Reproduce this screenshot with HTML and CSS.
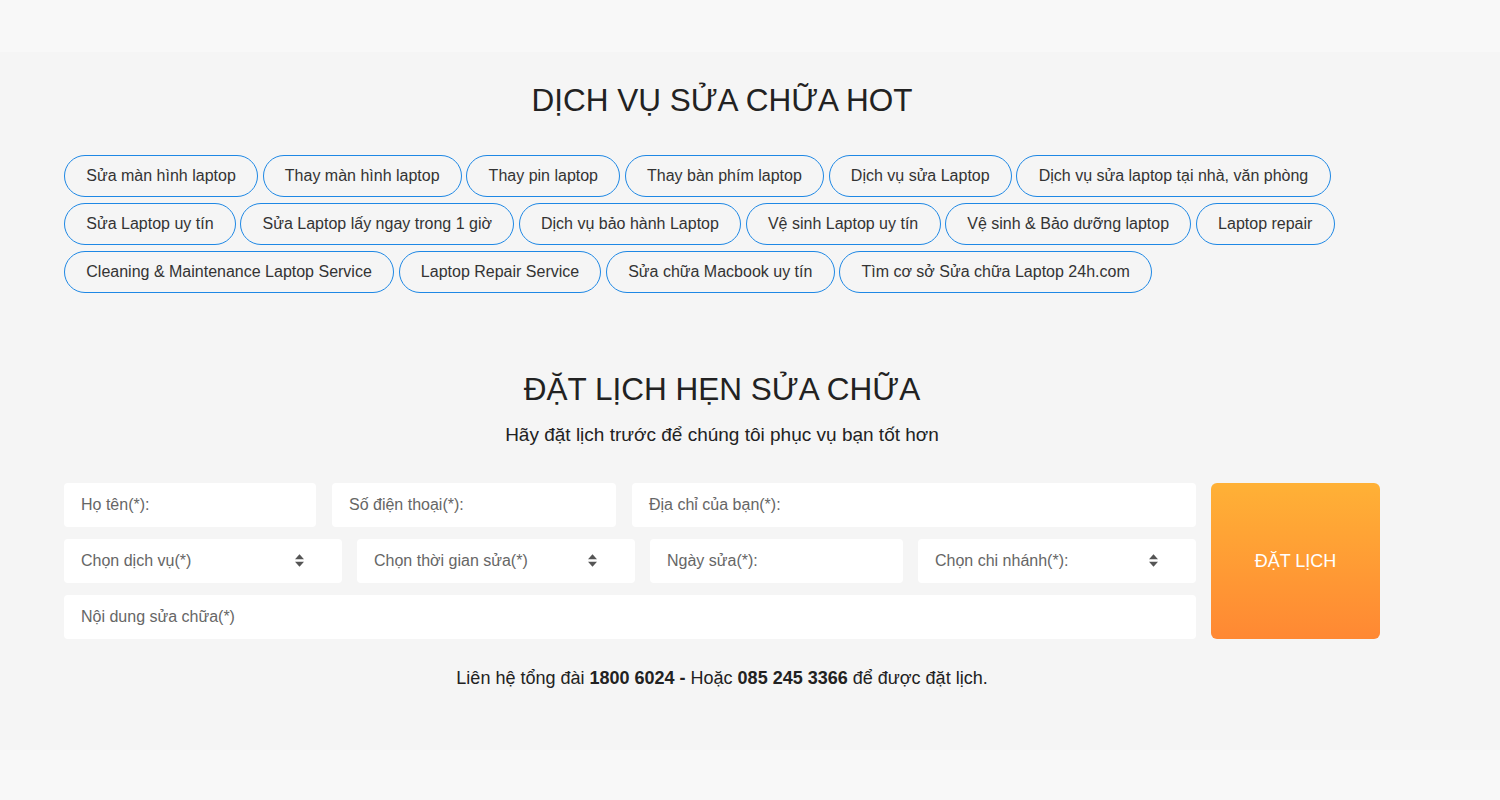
FILE: index.html
```html
<!DOCTYPE html>
<html lang="vi">
<head>
<meta charset="utf-8">
<title>Dịch vụ sửa chữa hot</title>
<link rel="stylesheet" href="styles.css">
</head>
<body>
<div class="band band-top"></div>
<main class="main">
  <section class="hot">
    <h2 class="title">DỊCH VỤ SỬA CHỮA HOT</h2>
    <div class="chips">
      <a class="chip">Sửa màn hình laptop</a>
      <a class="chip">Thay màn hình laptop</a>
      <a class="chip">Thay pin laptop</a>
      <a class="chip">Thay bàn phím laptop</a>
      <a class="chip">Dịch vụ sửa Laptop</a>
      <a class="chip">Dịch vụ sửa laptop tại nhà, văn phòng</a>
      <a class="chip">Sửa Laptop uy tín</a>
      <a class="chip">Sửa Laptop lấy ngay trong 1 giờ</a>
      <a class="chip">Dịch vụ bảo hành Laptop</a>
      <a class="chip">Vệ sinh Laptop uy tín</a>
      <a class="chip">Vệ sinh &amp; Bảo dưỡng laptop</a>
      <a class="chip">Laptop repair</a>
      <a class="chip">Cleaning &amp; Maintenance Laptop Service</a>
      <a class="chip">Laptop Repair Service</a>
      <a class="chip">Sửa chữa Macbook uy tín</a>
      <a class="chip">Tìm cơ sở Sửa chữa Laptop 24h.com</a>
    </div>
  </section>

  <section class="booking">
    <h2 class="title">ĐẶT LỊCH HẸN SỬA CHỮA</h2>
    <p class="subtitle">Hãy đặt lịch trước để chúng tôi phục vụ bạn tốt hơn</p>
    <form class="form">
      <div class="fields">
        <div class="row row-1">
          <div class="field">Họ tên(*):</div>
          <div class="field">Số điện thoại(*):</div>
          <div class="field">Địa chỉ của bạn(*):</div>
        </div>
        <div class="row row-2">
          <div class="field select"><span>Chọn dịch vụ(*)</span><svg class="sort" width="10" height="14" viewBox="0 0 10 14"><path d="M5 0 L10 5.5 H0 Z M0 8.5 H10 L5 14 Z" fill="#555"/></svg></div>
          <div class="field select"><span>Chọn thời gian sửa(*)</span><svg class="sort" width="10" height="14" viewBox="0 0 10 14"><path d="M5 0 L10 5.5 H0 Z M0 8.5 H10 L5 14 Z" fill="#555"/></svg></div>
          <div class="field">Ngày sửa(*):</div>
          <div class="field select"><span>Chọn chi nhánh(*):</span><svg class="sort" width="10" height="14" viewBox="0 0 10 14"><path d="M5 0 L10 5.5 H0 Z M0 8.5 H10 L5 14 Z" fill="#555"/></svg></div>
        </div>
        <div class="row row-3">
          <div class="field">Nội dung sửa chữa(*)</div>
        </div>
      </div>
      <button type="button" class="submit">ĐẶT LỊCH</button>
    </form>
    <p class="contact">Liên hệ tổng đài <b>1800 6024 -</b> Hoặc <b>085 245 3366</b> để được đặt lịch.</p>
  </section>
</main>
<div class="band band-bottom"></div>
</body>
</html>
```

FILE: styles.css
```css
* { box-sizing: border-box; }
html, body { margin: 0; padding: 0; }
body {
  background: #f5f5f5;
  font-family: "Liberation Sans", Arial, sans-serif;
  color: #222;
  width: 1500px;
  height: 800px;
  overflow: hidden;
}
.band { background: #f8f8f8; }
.band-top { height: 52px; }
.band-bottom { height: 50px; }

.main {
  height: 698px;
  padding-left: 64px;
}
.hot, .booking { width: 1316px; }

.title {
  margin: 0;
  font-size: 31.5px;
  line-height: 36px;
  font-weight: 400;
  text-align: center;
  color: #222;
}
.hot { padding-top: 30px; }
.chips {
  margin-top: 37px;
  display: flex;
  flex-wrap: wrap;
  gap: 6px 4.45px;
}
.chip {
  display: block;
  height: 42px;
  line-height: 40px;
  padding: 0 21.3px;
  border: 1px solid #1e88e5;
  border-radius: 21px;
  font-size: 16px;
  color: #333;
  white-space: nowrap;
}

.booking { padding-top: 78px; }
.subtitle {
  margin: 15px 0 0;
  font-size: 19px;
  line-height: 26px;
  text-align: center;
  color: #222;
}
.form {
  margin-top: 35px;
  display: flex;
  gap: 15px;
}
.fields {
  width: 1132px;
  display: flex;
  flex-direction: column;
  gap: 12px;
}
.row { display: grid; }
.row-1 { grid-template-columns: 252px 284px 1fr; gap: 16px; }
.row-2 { grid-template-columns: 278px 278px 253px 1fr; gap: 15px; }
.row-3 { grid-template-columns: 1fr; }
.field {
  height: 44px;
  background: #fff;
  border-radius: 4px;
  padding: 0 17px;
  display: flex;
  align-items: center;
  font-size: 16px;
  color: #666;
}
.select { justify-content: space-between; padding-right: 38px; }
.sort { display: block; width: 9px; height: 13px; margin-top: -2px; }
.submit {
  width: 169px;
  height: 156px;
  border: none;
  border-radius: 6px;
  background: linear-gradient(to bottom, #ffb136, #ff8833);
  color: #fff;
  font-family: "Liberation Sans", Arial, sans-serif;
  font-size: 18px;
  padding: 0;
}
.contact {
  margin: 27px 0 0;
  font-size: 18px;
  line-height: 24px;
  text-align: center;
  color: #222;
}
.contact b { font-weight: 700; color: #222; }
```
